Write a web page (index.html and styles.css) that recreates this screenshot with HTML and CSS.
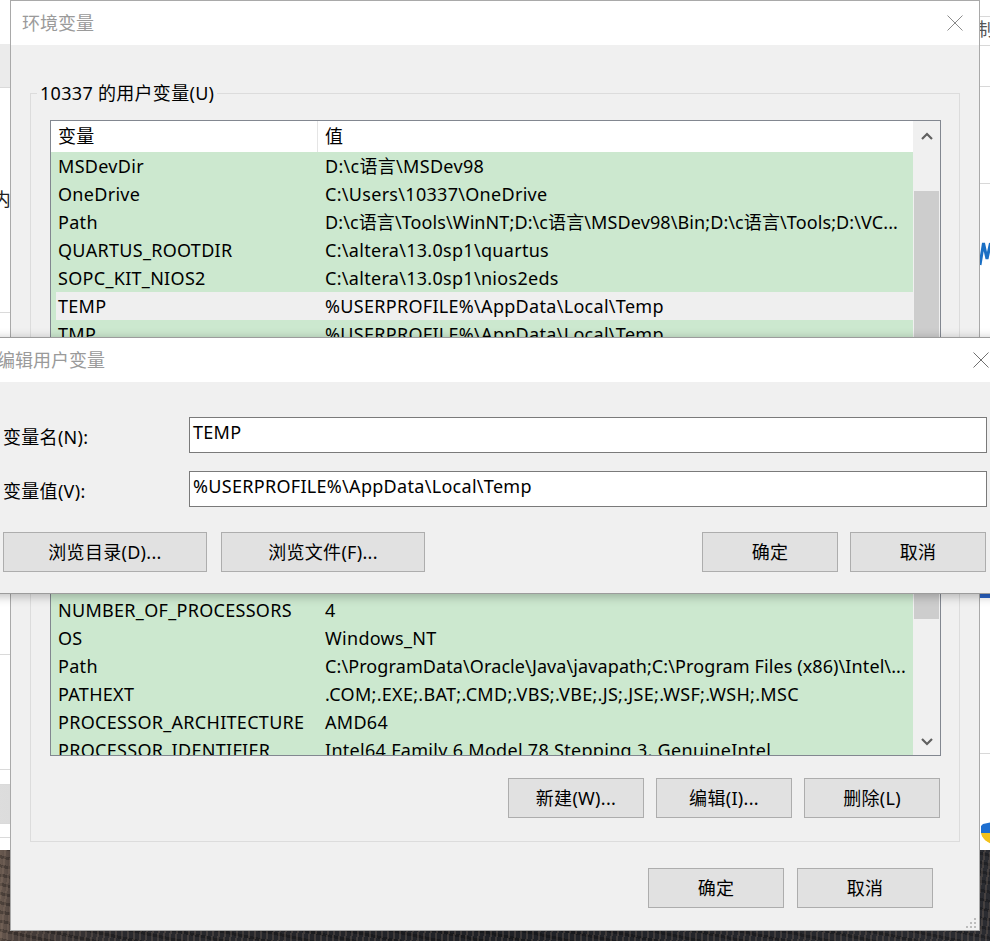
FILE: index.html
```html
<!DOCTYPE html>
<html lang="zh-CN">
<head>
<meta charset="utf-8">
<title>环境变量</title>
<link rel="stylesheet" href="styles.css">
</head>
<body>
<div class="bgwin bg-left">
  <div class="bl bl-a"></div>
  <div class="bl bl-b"></div>
  <div class="bl bl-c"><span class="bl-text">内</span></div>
  <div class="bl bl-d"></div>
  <div class="bl bl-e"></div>
  <div class="bl bl-f"></div>
  <div class="bl bl-g"></div>
  <div class="bl bl-h"></div>
</div>

<div class="bgwin bg-right">
  <div class="br br-a"></div>
  <div class="br br-b"><span class="br-text">制</span></div>
  <div class="br br-c"></div>
  <div class="br br-d"></div>
  <div class="br br-e">
    <svg class="br-logo" width="12" height="26" viewBox="0 0 12 26"><path d="M1 25 L4.5 3 L8 19 L11.5 3" fill="none" stroke="#1a6fc4" stroke-width="3"/></svg>
  </div>
  <div class="br br-f"><span class="br-blue"></span></div>
  <div class="br br-g">
    <svg class="br-shield" width="12" height="22" viewBox="0 0 12 22"><path d="M3 2 L12 0 L12 11 L1 11 L1 4 Z" fill="#1e6fd0"/><path d="M1 11 L12 11 L12 22 C6 20 2 16 1 11 Z" fill="#f4c21a"/></svg>
  </div>
</div>

<div class="window main">
  <div class="titlebar">
    <span class="title">环境变量</span>
    <svg class="close" width="16" height="16" viewBox="0 0 16 16"><path d="M0.5 0.5 L15.5 15.5 M15.5 0.5 L0.5 15.5" stroke="#8a8a8a" stroke-width="1"/></svg>
  </div>
  <div class="win-body">
    <fieldset class="group">
      <legend>10337 的用户变量(U)</legend>
      <div class="group-inner">
        <div class="listbox list-user">
          <div class="list-main">
            <div class="list-head"><span class="hcol">变量</span><span class="hcol hval">值</span></div>
            <div class="row"><span class="name">MSDevDir</span><span class="val">D:\c语言\MSDev98</span></div>
            <div class="row"><span class="name">OneDrive</span><span class="val">C:\Users\10337\OneDrive</span></div>
            <div class="row"><span class="name">Path</span><span class="val tight">D:\c语言\Tools\WinNT;D:\c语言\MSDev98\Bin;D:\c语言\Tools;D:\VC...</span></div>
            <div class="row"><span class="name">QUARTUS_ROOTDIR</span><span class="val">C:\altera\13.0sp1\quartus</span></div>
            <div class="row"><span class="name">SOPC_KIT_NIOS2</span><span class="val">C:\altera\13.0sp1\nios2eds</span></div>
            <div class="row selected"><span class="name">TEMP</span><span class="val">%USERPROFILE%\AppData\Local\Temp</span></div>
            <div class="row"><span class="name">TMP</span><span class="val">%USERPROFILE%\AppData\Local\Temp</span></div>
          </div>
          <div class="vscroll">
            <div class="sb-arrow"><svg width="12" height="8" viewBox="0 0 12 8"><path d="M1 7 L6 2 L11 7" fill="none" stroke="#606060" stroke-width="2.2"/></svg></div>
            <div class="sb-track"><div class="sb-thumb thumb-user"></div></div>
            <div class="sb-arrow down"><svg width="12" height="8" viewBox="0 0 12 8"><path d="M1 1 L6 6 L11 1" fill="none" stroke="#606060" stroke-width="2.2"/></svg></div>
          </div>
        </div>

        <div class="listbox list-sys">
          <div class="list-main">
            <div class="list-head"><span class="hcol">变量</span><span class="hcol hval">值</span></div>
            <div class="row"><span class="name">CLASSPATH</span><span class="val">.;%JAVA_HOME%\lib</span></div>
            <div class="row"><span class="name">ComSpec</span><span class="val">C:\WINDOWS\system32\cmd.exe</span></div>
            <div class="row"><span class="name">DriverData</span><span class="val">C:\Windows\System32\Drivers\DriverData</span></div>
            <div class="row"><span class="name">JAVA_HOME</span><span class="val">C:\Program Files\Java\jdk1.8.0</span></div>
            <div class="row"><span class="name">NUMBER_OF_PROCESSORS</span><span class="val">4</span></div>
            <div class="row"><span class="name">OS</span><span class="val">Windows_NT</span></div>
            <div class="row"><span class="name">Path</span><span class="val tight">C:\ProgramData\Oracle\Java\javapath;C:\Program Files (x86)\Intel\...</span></div>
            <div class="row"><span class="name">PATHEXT</span><span class="val">.COM;.EXE;.BAT;.CMD;.VBS;.VBE;.JS;.JSE;.WSF;.WSH;.MSC</span></div>
            <div class="row"><span class="name">PROCESSOR_ARCHITECTURE</span><span class="val">AMD64</span></div>
            <div class="row"><span class="name">PROCESSOR_IDENTIFIER</span><span class="val">Intel64 Family 6 Model 78 Stepping 3, GenuineIntel</span></div>
          </div>
          <div class="vscroll">
            <div class="sb-arrow"><svg width="12" height="8" viewBox="0 0 12 8"><path d="M1 7 L6 2 L11 7" fill="none" stroke="#606060" stroke-width="2.2"/></svg></div>
            <div class="sb-track"><div class="sb-thumb thumb-sys"></div></div>
            <div class="sb-arrow down"><svg width="12" height="8" viewBox="0 0 12 8"><path d="M1 1 L6 6 L11 1" fill="none" stroke="#606060" stroke-width="2.2"/></svg></div>
          </div>
        </div>

        <div class="btn-row group-btns">
          <button class="btn">新建(W)...</button>
          <button class="btn">编辑(I)...</button>
          <button class="btn">删除(L)</button>
        </div>
      </div>
    </fieldset>
    <div class="btn-row bottom-btns">
      <button class="btn">确定</button>
      <button class="btn">取消</button>
    </div>
  </div>
  <svg class="grip" width="12" height="12" viewBox="0 0 12 12"><g fill="#bcbcbc"><rect x="9" y="1" width="2" height="2"/><rect x="5" y="5" width="2" height="2"/><rect x="9" y="5" width="2" height="2"/><rect x="1" y="9" width="2" height="2"/><rect x="5" y="9" width="2" height="2"/><rect x="9" y="9" width="2" height="2"/></g></svg>
</div>

<div class="window dialog">
  <div class="titlebar dlg-title">
    <span class="title">编辑用户变量</span>
    <svg class="close dlg-close" width="16" height="16" viewBox="0 0 16 16"><path d="M0.5 0.5 L15.5 15.5 M15.5 0.5 L0.5 15.5" stroke="#707070" stroke-width="1"/></svg>
  </div>
  <div class="dlg-body">
    <div class="form">
      <label class="flabel">变量名(N):</label>
      <div class="field">TEMP</div>
      <label class="flabel">变量值(V):</label>
      <div class="field">%USERPROFILE%\AppData\Local\Temp</div>
    </div>
    <div class="btn-row dlg-btns">
      <button class="btn wide">浏览目录(D)...</button>
      <button class="btn wide">浏览文件(F)...</button>
      <span class="spacer"></span>
      <button class="btn">确定</button>
      <button class="btn">取消</button>
    </div>
  </div>
</div>
</body>
</html>
```

FILE: styles.css
```css
* { box-sizing: border-box; }

html, body { margin: 0; padding: 0; }

body {
  width: 990px;
  height: 941px;
  overflow: hidden;
  position: relative;
  font-family: "Noto Sans", "Noto Sans CJK SC", sans-serif;
  font-size: 18px;
  letter-spacing: 0.3px;
  color: #000;
  background-color: #25262a;
  background-image:
    repeating-linear-gradient(97deg, rgba(140,120,105,0.28) 0 2px, transparent 2px 6px),
    repeating-linear-gradient(12deg, rgba(0,0,0,0.25) 0 3px, transparent 3px 9px),
    linear-gradient(90deg, #6a5a50 0, #4a403c 14px, #2a2a2e 120px, #1f2126 500px, #2b2c31 990px);
}

/* ---------- background windows ---------- */
.bgwin {
  position: absolute;
  top: 0;
  height: 850px;
  background: #fff;
  display: flex;
  flex-direction: column;
  overflow: hidden;
}
.bg-left { left: -290px; width: 300px; }
.bg-right { left: 979px; width: 300px; }

.bl { flex: none; border-bottom: 1px solid #dadada; }
.bl-a { height: 44px; border-bottom: none; }
.bl-b { height: 44px; background: #ebebeb; }
.bl-c { height: 225px; text-align: right; padding-top: 101px; line-height: 20px; color: #222; }
.bl-text { margin-right: -1px; }
.bl-d { height: 342px; }
.bl-e { height: 115px; }
.bl-f { height: 15px; }
.bl-g { height: 39px; background: linear-gradient(90deg, #f4f4f4, #dcdcdc); }
.bl-h { height: 14px; }

.br { flex: none; border-bottom: 1px solid #d8d8d8; }
.br-a { height: 17px; }
.br-b { height: 29px; line-height: 24px; color: #555; overflow: hidden; }
.br-text { display: inline-block; margin-left: -3px; }
.br-c { height: 41px; }
.br-d { height: 97px; }
.br-e { height: 408px; padding-top: 56px; border-bottom: none; }
.br-logo { display: block; }
.br-f { height: 162px; }
.br-blue { display: block; width: 10px; height: 5px; margin: 1px 0 0 1px; background: #2a63c6; }
.br-g { flex: 1; border-bottom: none; padding-top: 68px; }
.br-shield { display: block; margin-left: 1px; }

/* ---------- windows ---------- */
.window {
  position: absolute;
  background: #f0f0f0;
  border: 1px solid #a9a9a9;
  display: flex;
  flex-direction: column;
}

.main {
  left: 10px;
  top: 0;
  width: 970px;
  height: 931px;
}

.titlebar {
  flex: none;
  height: 44px;
  background: #fff;
  display: flex;
  align-items: center;
  justify-content: space-between;
  padding: 0 16px 0 11px;
  color: #9a9a9a;
  line-height: 24px;
  letter-spacing: 0;
}
.close { display: block; flex: none; }

.win-body {
  flex: 1;
  display: flex;
  flex-direction: column;
  padding: 36px 19px 22px 19px;
}

/* ---------- group box ---------- */
.group {
  margin: 0;
  padding: 0;
  border: 1px solid #dcdcdc;
  min-width: 0;
}
.group legend {
  margin-left: 6px;
  padding: 0 3px;
  line-height: 24px;
  height: 24px;
  font-size: 18px;
}
.group-inner {
  padding: 15px 18px 23px 19px;
  display: flex;
  flex-direction: column;
}

/* ---------- list view ---------- */
.listbox {
  border: 1px solid #828790;
  background: #cce8cf;
  display: flex;
  overflow: hidden;
}
.list-user { height: 290px; }
.list-sys { height: 304px; margin-top: 42px; }

.list-main {
  flex: 1;
  min-width: 0;
  display: flex;
  flex-direction: column;
  overflow: hidden;
}
.list-head {
  flex: none;
  height: 31px;
  background: #fff;
  display: grid;
  grid-template-columns: 266px 1fr;
}
.hcol {
  padding-left: 7px;
  line-height: 30px;
}
.hval {
  border-left: 1px solid #e5e5e5;
  padding-left: 7px;
}

.row {
  flex: none;
  height: 28px;
  margin-left: 5px;
  display: grid;
  grid-template-columns: 261px 1fr;
  line-height: 28px;
  white-space: nowrap;
}
.row .name { padding-left: 2px; overflow: hidden; }
.row .val { padding-left: 8px; overflow: hidden; }
.row .val.tight { letter-spacing: 0.1px; }
.row.selected { background: #efefef; }

.vscroll {
  flex: none;
  width: 27px;
  background: #f0f0f0;
  display: flex;
  flex-direction: column;
}
.sb-arrow {
  flex: none;
  height: 30px;
  display: flex;
  align-items: center;
  justify-content: center;
}
.sb-arrow svg { display: block; }
.sb-arrow.down { padding-top: 4px; }
.sb-track { flex: 1; }
.sb-thumb { margin: 0 1px; background: #cdcdcd; }
.thumb-user { margin-top: 40px; height: 160px; }
.thumb-sys { margin-top: 20px; height: 116px; }

/* ---------- buttons ---------- */
.btn-row { display: flex; justify-content: flex-end; }
.btn {
  flex: none;
  width: 136px;
  height: 40px;
  margin: 0;
  padding: 0;
  background: #e1e1e1;
  border: 1px solid #adadad;
  font: inherit;
  letter-spacing: inherit;
  color: #000;
  line-height: 24px;
}
.group-btns { margin-top: 22px; margin-right: 1px; gap: 12px; }
.bottom-btns { margin-top: 26px; margin-right: 27px; gap: 13px; }

.grip { position: absolute; right: 2px; bottom: 1px; }

/* ---------- edit dialog ---------- */
.dialog {
  left: -15px;
  top: 337px;
  width: 1021px;
  height: 257px;
  border-color: #9c9c9c;
  box-shadow: 0 2px 10px rgba(0,0,0,0.28);
}
.dlg-title { padding: 0 16px 0 11px; }

.dlg-body {
  flex: 1;
  padding: 35px 18px 21px 17px;
  display: flex;
  flex-direction: column;
}
.form {
  display: grid;
  grid-template-columns: 186px 1fr;
  row-gap: 18px;
  align-items: center;
}
.flabel { padding-top: 3px; line-height: 24px; }
.field {
  height: 36px;
  background: #fff;
  border: 1px solid #7a7a7a;
  padding: 2px 3px 0;
  line-height: 24px;
  white-space: nowrap;
}
.dlg-btns { margin-top: 25px; margin-right: 1px; }
.dlg-btns .btn.wide { width: 204px; }
.dlg-btns .btn.wide + .btn.wide { margin-left: 14px; }
.dlg-btns .spacer { flex: 1; }
.dlg-btns .spacer + .btn + .btn { margin-left: 12px; }
```
